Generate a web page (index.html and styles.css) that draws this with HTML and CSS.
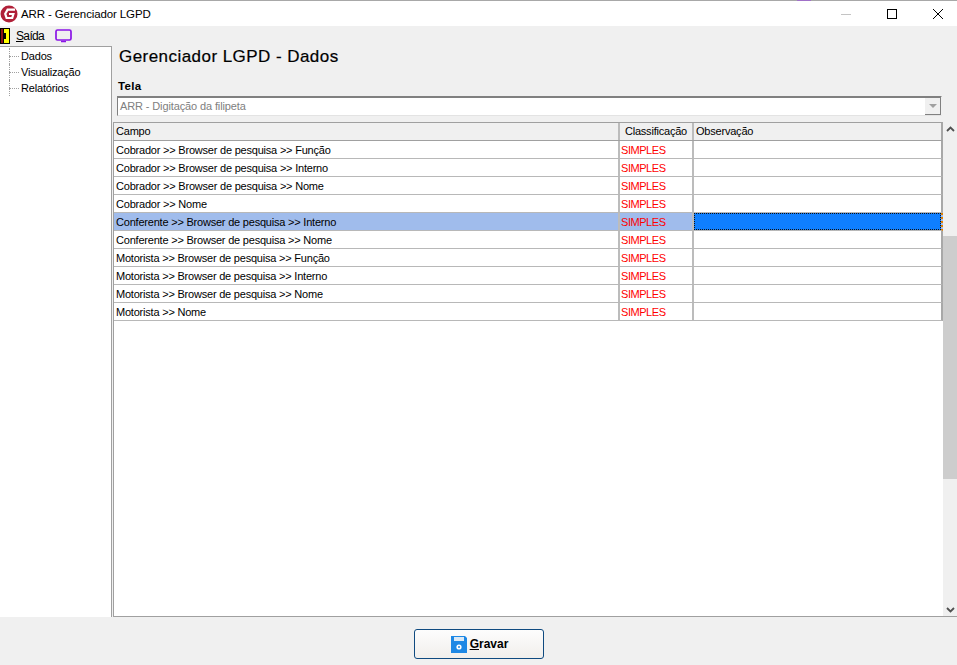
FILE: index.html
```html
<!DOCTYPE html>
<html lang="pt">
<head>
<meta charset="utf-8">
<title>ARR - Gerenciador LGPD</title>
<link rel="stylesheet" href="styles.css">
</head>
<body>
<div class="window">
  <header class="titlebar">
    <svg class="logo" viewBox="0 0 18 18" width="18" height="18"><circle cx="9" cy="9" r="8.5" fill="#b02038"/><path d="M15 4.6H7.6L5.2 8.8 6.6 13h5.6l1.2-4H9" fill="none" stroke="#fff" stroke-width="2.2"/></svg>
    <span class="title">ARR - Gerenciador LGPD</span>
    <div class="controls">
      <svg width="10" height="10" viewBox="0 0 10 10"><path d="M0 5.5h10" stroke="#c4c4c4"/></svg>
      <svg width="10" height="10" viewBox="0 0 10 10"><rect x=".5" y=".5" width="9" height="9" fill="none" stroke="#000"/></svg>
      <svg width="10" height="10" viewBox="0 0 10 10"><path d="M0 0l10 10M10 0L0 10" stroke="#000"/></svg>
    </div>
  </header>
  <div class="toolbar">
    <svg class="exit" width="10" height="16" viewBox="0 0 10 16"><rect width="10" height="16" fill="#000"/><rect x="4" y="1" width="5" height="14" fill="#ffff00"/><rect x="1" y="1" width="2" height="14" fill="#8a1010"/><rect x="4" y="5" width="2" height="6" fill="#000"/></svg>
    <span class="menu"><u>S</u>aída</span>
    <svg class="screen" width="17" height="14" viewBox="0 0 17 14"><rect x="1" y="1" width="15" height="10" rx="1.5" fill="none" stroke="#8a14e6" stroke-width="1.7"/><path d="M6 12.5h5" stroke="#8a14e6" stroke-width="1.5"/></svg>
  </div>
  <div class="body">
    <nav class="tree">
      <div class="node">Dados</div>
      <div class="node">Visualização</div>
      <div class="node">Relatórios</div>
    </nav>
    <main class="content">
      <div class="head">
        <h1>Gerenciador LGPD - Dados</h1>
        <label>Tela</label>
        <div class="combo">
          <span>ARR - Digitação da filipeta</span>
          <span class="arrow"><i></i></span>
        </div>
      </div>
      <div class="gridwrap">
        <div class="grid">
          <div class="row header"><div class="c1">Campo</div><div class="c2 center">Classificação</div><div class="c3">Observação</div></div>
          <div class="row"><div class="c1">Cobrador &gt;&gt; Browser de pesquisa &gt;&gt; Função</div><div class="c2 red">SIMPLES</div><div class="c3"></div></div>
          <div class="row"><div class="c1">Cobrador &gt;&gt; Browser de pesquisa &gt;&gt; Interno</div><div class="c2 red">SIMPLES</div><div class="c3"></div></div>
          <div class="row"><div class="c1">Cobrador &gt;&gt; Browser de pesquisa &gt;&gt; Nome</div><div class="c2 red">SIMPLES</div><div class="c3"></div></div>
          <div class="row"><div class="c1">Cobrador &gt;&gt; Nome</div><div class="c2 red">SIMPLES</div><div class="c3"></div></div>
          <div class="row sel"><div class="c1">Conferente &gt;&gt; Browser de pesquisa &gt;&gt; Interno</div><div class="c2 red">SIMPLES</div><div class="c3 focus"></div></div>
          <div class="row"><div class="c1">Conferente &gt;&gt; Browser de pesquisa &gt;&gt; Nome</div><div class="c2 red">SIMPLES</div><div class="c3"></div></div>
          <div class="row"><div class="c1">Motorista &gt;&gt; Browser de pesquisa &gt;&gt; Função</div><div class="c2 red">SIMPLES</div><div class="c3"></div></div>
          <div class="row"><div class="c1">Motorista &gt;&gt; Browser de pesquisa &gt;&gt; Interno</div><div class="c2 red">SIMPLES</div><div class="c3"></div></div>
          <div class="row"><div class="c1">Motorista &gt;&gt; Browser de pesquisa &gt;&gt; Nome</div><div class="c2 red">SIMPLES</div><div class="c3"></div></div>
          <div class="row"><div class="c1">Motorista &gt;&gt; Nome</div><div class="c2 red">SIMPLES</div><div class="c3"></div></div>
        </div>
        <div class="scrollbar">
          <svg width="9" height="6" viewBox="0 0 9 6"><path d="M1 5l3.5-3.5L8 5" fill="none" stroke="#505050" stroke-width="1.8"/></svg>
          <div class="track"><div class="thumb"></div></div>
          <svg width="9" height="6" viewBox="0 0 9 6"><path d="M1 1l3.5 3.5L8 1" fill="none" stroke="#505050" stroke-width="1.8"/></svg>
        </div>
      </div>
    </main>
  </div>
  <footer class="footer">
    <button class="save" type="button">
      <svg width="16" height="17" viewBox="0 0 16 17"><path d="M0 0h14l2 2v15H0z" fill="#1e88e5"/><rect x="3" y="1" width="10" height="4" fill="#dbe9f5"/><circle cx="8" cy="11" r="2.6" fill="#fff"/><circle cx="8" cy="11" r="1" fill="#1e88e5"/></svg>
      <span><u>G</u>ravar</span>
    </button>
  </footer>
</div>
</body>
</html>
```
FILE: styles.css
```css
* { box-sizing: border-box; }
html, body { margin: 0; height: 100%; }
body { font-family: "Liberation Sans", Arial, sans-serif; font-size: 11px; color: #000; background: #f0f0f0; }
.window { width: 957px; height: 665px; display: flex; flex-direction: column; overflow: hidden; }
.titlebar { height: 26px; flex: none; background: #fff; border-top: 1px solid #a8a8a8; display: flex; align-items: center; position: relative; }
.titlebar::before { content: ""; position: absolute; left: 797px; top: -1px; width: 14px; height: 1px; background: #a070c8; }
.logo { margin: 0 3px 0 0; }
.title { font-size: 11.5px; letter-spacing: -.12px; }
.controls { margin-left: auto; display: flex; gap: 36px; padding-right: 14px; align-items: center; }
.toolbar { height: 20px; flex: none; display: flex; align-items: center; background: #f0f0f0; }
.exit { margin-right: 6px; }
.menu { font-size: 12px; margin-right: 11px; letter-spacing: -.65px; }
.body { flex: 1; min-height: 0; display: flex; }
.tree { width: 112px; flex: none; background: #fff; border-right: 1px solid #a0a0a0; border-top: 1px solid #a0a0a0; padding-top: 1px; }
.node { height: 16px; line-height: 16px; padding-left: 21px; font-size: 11px; letter-spacing: -.18px; position: relative; }
.node::before { content: ""; position: absolute; left: 9px; width: 10px; top: 8px; border-top: 1px dotted #a0a0a0; }
.node::after { content: ""; position: absolute; left: 9px; top: 0; height: 16px; border-left: 1px dotted #a0a0a0; }
.content { flex: 1; min-width: 0; display: flex; flex-direction: column; padding-left: 1px; }
.head { padding: 0 15px 0 4px; height: 76px; flex: none; }
h1 { font-size: 17px; font-weight: normal; margin: 0; padding: 1px 0 0 2px; line-height: 20px; height: 26px; letter-spacing: .45px; -webkit-text-stroke: .2px #000; }
label { display: block; font-weight: bold; font-size: 11.5px; line-height: 14px; margin-top: 7px; height: 14px; letter-spacing: .3px; padding-left: 1px; }
.combo { height: 20px; margin-top: 3px; background: #fff; border: 1px solid; border-color: #808080 #f0f0f0 #e3e3e3 #808080; box-shadow: inset 0 1px 0 #808080; display: flex; align-items: center; justify-content: space-between; color: #808080; padding-left: 2px; letter-spacing: -.12px; }
.arrow { width: 16px; height: 17px; background: #f0f0f0; border-right: 1px solid #808080; border-bottom: 1px solid #808080; display: flex; align-items: center; justify-content: center; }
.arrow i { border: 4px solid transparent; border-top: 4px solid #a0a0a0; border-bottom: 0; }
.gridwrap { flex: 1; min-height: 0; display: flex; background: #fff; border-bottom: 1px solid #a0a0a0; }
.grid { flex: 1; min-width: 0; border-left: 1px solid #a0a0a0; }
.row { display: flex; height: 18px; line-height: 17px; border-bottom: 1px solid #b8b8b8; border-right: 2px solid #a8a8a8; letter-spacing: -.21px; }
.row > div { border-right: 2px solid #bcbcbc; padding-left: 2px; padding-top: 1px; white-space: nowrap; overflow: hidden; }
.c1 { width: 506px; }
.c2 { width: 74px; }
.c3 { flex: 1; border-right: 0 !important; }
.header { background: #f0f0f0; border-top: 1px solid #a0a0a0; height: 19px; border-bottom: 1px solid #a0a0a0; }
.header > div { padding-top: 0; }
.center { text-align: center; padding-left: 0 !important; }
.red { color: #ff0000; letter-spacing: -.45px; padding-left: 1px !important; }
.sel { background: #a0bcec; border-right: 2px dotted #e08000; }
.focus { background: #0f7fff; outline: 1px dotted #111; outline-offset: -1px; }
.scrollbar { width: 14px; flex: none; background: #f0f0f0; display: flex; flex-direction: column; align-items: center; padding: 4px 0 3px; }
.track { flex: 1; width: 100%; padding-top: 104px; padding-bottom: 128px; display: flex; }
.thumb { flex: 1; background: #cdcdcd; }
.footer { height: 48px; flex: none; display: flex; justify-content: center; align-items: flex-start; padding-top: 12px; }
.save { width: 130px; height: 30px; font-family: inherit; font-weight: bold; font-size: 12px; color: #000; border: 1px solid #0f4a80; border-radius: 3px; background: linear-gradient(#fdfdfd, #f1efec); display: flex; align-items: center; justify-content: center; gap: 3px; padding: 0 0 0 2px; }
```
